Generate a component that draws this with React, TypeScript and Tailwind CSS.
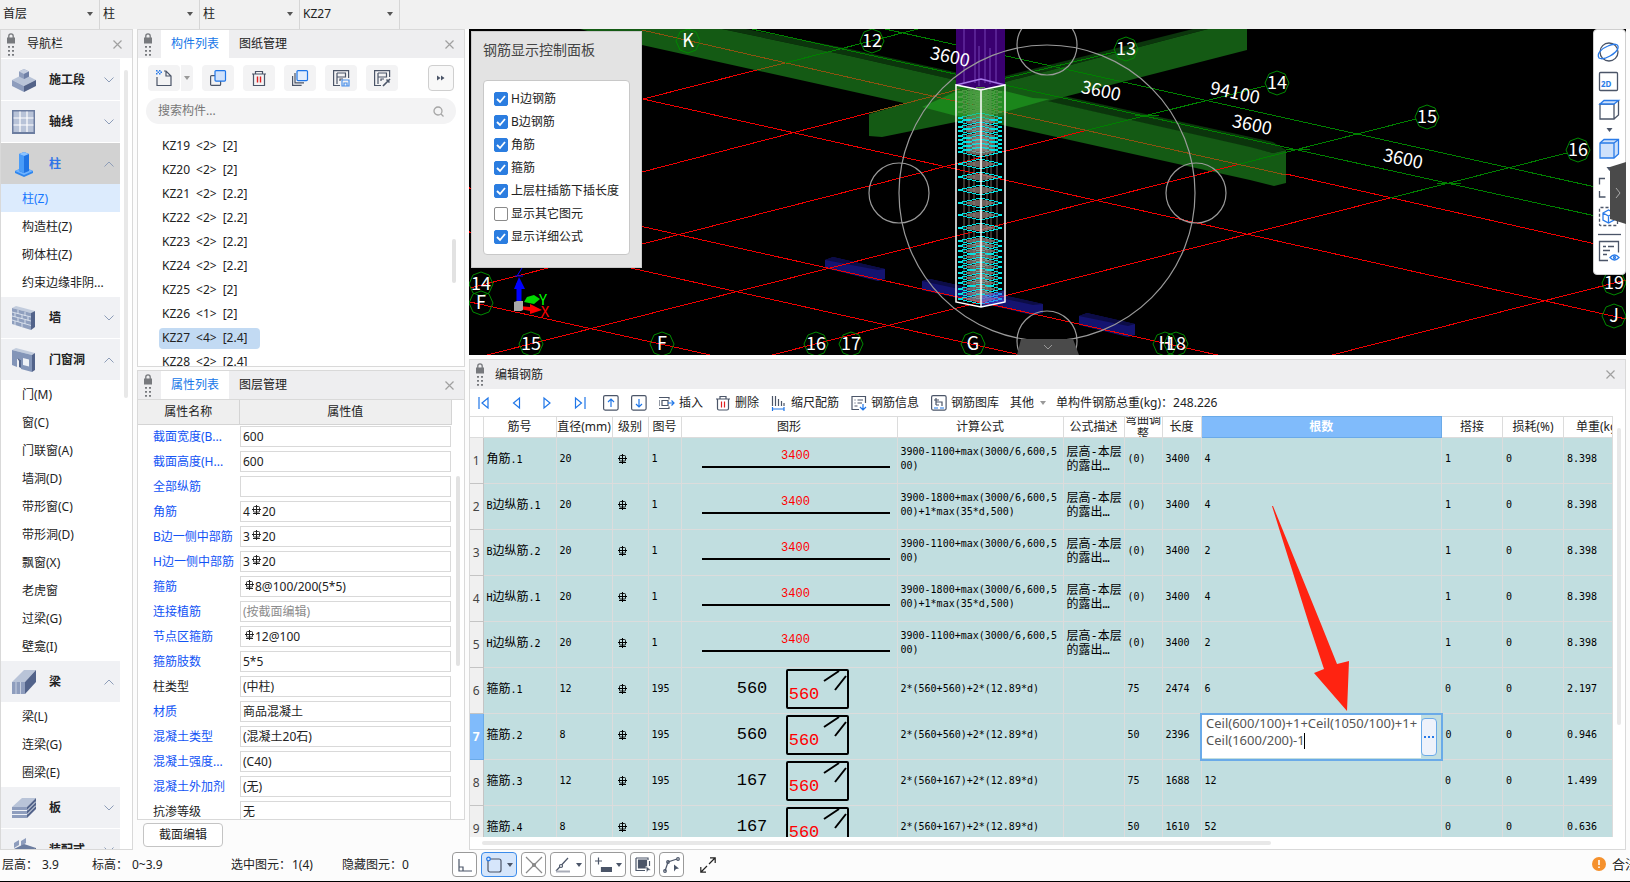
import React from 'react';

const FONT = 'font-["Noto_Sans","Noto_Sans_CJK_SC",sans-serif]';
const MONO = 'font-["DejaVu_Sans_Mono","Noto_Sans_CJK_SC",monospace]';

const selectors = ['首层', '柱', '柱', 'KZ27'];

const navGroups = [
  { name: '施工段', icon: 'stage', open: false, items: [] },
  { name: '轴线', icon: 'grid', open: false, items: [] },
  { name: '柱', icon: 'column', open: true, active: true, items: ['柱(Z)', '构造柱(Z)', '砌体柱(Z)', '约束边缘非阴...'] },
  { name: '墙', icon: 'wall', open: false, items: [] },
  {
    name: '门窗洞',
    icon: 'door',
    open: true,
    items: ['门(M)', '窗(C)', '门联窗(A)', '墙洞(D)', '带形窗(C)', '带形洞(D)', '飘窗(X)', '老虎窗', '过梁(G)', '壁龛(I)'],
  },
  { name: '梁', icon: 'beam', open: true, items: ['梁(L)', '连梁(G)', '圈梁(E)'] },
  { name: '板', icon: 'slab', open: false, items: [] },
  { name: '装配式', icon: 'prefab', open: false, items: [] },
];

const components = [
  'KZ19 <2> [2]',
  'KZ20 <2> [2]',
  'KZ21 <2> [2.2]',
  'KZ22 <2> [2.2]',
  'KZ23 <2> [2.2]',
  'KZ24 <2> [2.2]',
  'KZ25 <2> [2]',
  'KZ26 <1> [2]',
  'KZ27 <4> [2.4]',
  'KZ28 <2> [2.4]',
];

// bar: the steel grade mark stands between prefix and value
const properties = [
  { name: '截面宽度(B...', value: '600', blue: true },
  { name: '截面高度(H...', value: '600', blue: true },
  { name: '全部纵筋', value: '', blue: true },
  { name: '角筋', prefix: '4', bar: true, value: '20', blue: true },
  { name: 'B边一侧中部筋', prefix: '3', bar: true, value: '20', blue: true },
  { name: 'H边一侧中部筋', prefix: '3', bar: true, value: '20', blue: true },
  { name: '箍筋', bar: true, value: '8@100/200(5*5)', blue: true },
  { name: '连接植筋', value: '(按截面编辑)', blue: true, muted: true },
  { name: '节点区箍筋', bar: true, value: '12@100', blue: true },
  { name: '箍筋肢数', value: '5*5', blue: true },
  { name: '柱类型', value: '(中柱)', blue: false },
  { name: '材质', value: '商品混凝土', blue: true },
  { name: '混凝土类型', value: '(混凝土20石)', blue: true },
  { name: '混凝土强度...', value: '(C40)', blue: true },
  { name: '混凝土外加剂', value: '(无)', blue: true },
  { name: '抗渗等级', value: '无', blue: false },
];

const displayOptions = [
  { label: 'H边钢筋', checked: true },
  { label: 'B边钢筋', checked: true },
  { label: '角筋', checked: true },
  { label: '箍筋', checked: true },
  { label: '上层柱插筋下插长度', checked: true },
  { label: '显示其它图元', checked: false },
  { label: '显示详细公式', checked: true },
];

const SHORT = ['3900-1100+max(3000/6,600,5', '00)'];
const LONG = ['3900-1800+max(3000/6,600,5', '00)+1*max(35*d,500)'];

const rebarRows = [
  { pre: '', cjk: '角筋', post: '.1', dia: '20', fig: '1', formula: SHORT, desc: true, bend: '(0)', len: '3400', count: '4', lap: '1', weight: '8.398' },
  { pre: 'B', cjk: '边纵筋', post: '.1', dia: '20', fig: '1', formula: LONG, desc: true, bend: '(0)', len: '3400', count: '4', lap: '1', weight: '8.398' },
  { pre: 'B', cjk: '边纵筋', post: '.2', dia: '20', fig: '1', formula: SHORT, desc: true, bend: '(0)', len: '3400', count: '2', lap: '1', weight: '8.398' },
  { pre: 'H', cjk: '边纵筋', post: '.1', dia: '20', fig: '1', formula: LONG, desc: true, bend: '(0)', len: '3400', count: '4', lap: '1', weight: '8.398' },
  { pre: 'H', cjk: '边纵筋', post: '.2', dia: '20', fig: '1', formula: SHORT, desc: true, bend: '(0)', len: '3400', count: '2', lap: '1', weight: '8.398' },
  { pre: '', cjk: '箍筋', post: '.1', dia: '12', fig: '195', side: '560', formula: ['2*(560+560)+2*(12.89*d)'], bend: '75', len: '2474', count: '6', lap: '0', weight: '2.197' },
  { pre: '', cjk: '箍筋', post: '.2', dia: '8', fig: '195', side: '560', formula: ['2*(560+560)+2*(12.89*d)'], bend: '50', len: '2396', count: '', editing: true, lap: '0', weight: '0.946' },
  { pre: '', cjk: '箍筋', post: '.3', dia: '12', fig: '195', side: '167', formula: ['2*(560+167)+2*(12.89*d)'], bend: '75', len: '1688', count: '12', lap: '0', weight: '1.499' },
  { pre: '', cjk: '箍筋', post: '.4', dia: '8', fig: '195', side: '167', formula: ['2*(560+167)+2*(12.89*d)'], bend: '50', len: '1610', count: '52', lap: '0', weight: '0.636' },
];

const RebarMark = ({ className = '' }: { className?: string }) => (
  <svg className={`inline-block shrink-0 ${className}`} width="9" height="10" viewBox="0 0 9 10" fill="none" stroke="currentColor">
    <path d="M4.500 0v10M0 4.500h9M1 8.500h7" />
    <path d="M2.500 1.500h4q1 0 1 1v4q0 .5-.5.5h-5q-.5 0-.5-.5v-4q0-1 1-1z" strokeWidth=".9" />
  </svg>
);

const Caret = ({ className = 'text-[#555]' }: { className?: string }) => (
  <svg className={`shrink-0 ${className}`} width="6" height="4" viewBox="0 0 6 4" fill="currentColor">
    <path d="M0 0h6L3 4z" />
  </svg>
);

const Chevron = ({ open }: { open: boolean }) => (
  <svg className="mr-1.5 ml-auto text-[#8d9db8]" width="10" height="6" viewBox="0 0 10 6" fill="none" stroke="currentColor">
    <path d={open ? 'M.5 5.500L5 1l4.500 4.500' : 'M.5 .5L5 5l4.500-4.500'} />
  </svg>
);

const CloseButton = () => (
  <button aria-label="关闭" className="mr-2.5 ml-auto text-[#a0a0a0]">
    <svg width="9" height="9" viewBox="0 0 9 9" stroke="currentColor" strokeWidth="1.2">
      <path d="M.5 .5l8 8M8.500 .5l-8 8" />
    </svg>
  </button>
);

const Grip = () => (
  <svg className="shrink-0 text-[#77797d]" width="8" height="23" viewBox="0 0 8 23" fill="currentColor">
    <path d="M0 4.500h8v6H0z" />
    <path d="M1.800 5V3a2.200 2.200 0 0 1 4.400 0v2" fill="none" stroke="currentColor" strokeWidth="1.300" />
    <path d="M1 13h2v1.800H1zM5 13h2v1.800H5zM1 17h2v1.800H1zM5 17h2v1.800H5zM1 21h2v1.800H1zM5 21h2v1.800H5z" />
  </svg>
);

const NavIcon = ({ name }: { name: string }) => (
  <svg width="26" height="26" viewBox="0 0 26 26" className="shrink-0">
    {name === 'stage' && (
      <>
        <path d="M1 13l12-6 12 6-12 6z" fill="#b9c4d8" />
        <path d="M1 13l12 6v6L1 19z" fill="#8e9dbd" />
        <path d="M25 13l-12 6v6l12-6z" fill="#536388" />
        <path d="M8 4.500L13 2l5 2.500v5L13 12l-5-2.500z" fill="#8e9dbd" />
        <path d="M8 4.500L13 2l5 2.500L13 7z" fill="#c6cfe0" />
        <path d="M13 7l5-2.500v5L13 12z" fill="#6f80a6" />
      </>
    )}
    {name === 'grid' && (
      <>
        <path d="M1 1h23v24H1z" fill="#6c7da0" />
        <path d="M2.500 2.500h20v20.500h-20z" fill="#b8c3d8" />
        <path d="M9 2.500v20.500M16 2.500v20.500M2.500 9h20M2.500 16h20" stroke="#fff" strokeWidth="1.200" />
      </>
    )}
    {name === 'column' && (
      <>
        <path d="M4 20l9-4 9 4v2l-9 4-9-4z" fill="#2f86ee" />
        <path d="M4 20l9-4 9 4-9 4z" fill="#70b3ff" />
        <path d="M8 3l5-2 5 2v17l-5 2-5-2z" fill="#2074e4" />
        <path d="M8 3l5 2v17l-5-2z" fill="#4a9cf8" />
        <path d="M8 3l5-2 5 2-5 2z" fill="#8cc4ff" />
      </>
    )}
    {name === 'wall' && (
      <>
        <path d="M1 3l4-2 19 5-4 2z" fill="#c2ccdd" />
        <path d="M20 8l4-2v16l-4 3z" fill="#52638a" />
        <path d="M1 3l19 5v17L1 19z" fill="#8f9fbe" />
        <path d="M1 7l19 5M1 11l19 5M1 15l19 5.500M7 5v4M14 7v4M4 8v4M11 10v4M17 11.500v4M7 13v4M14 15v4M4 16v4M11 18v4" stroke="#dfe5ef" strokeWidth=".9" />
      </>
    )}
    {name === 'door' && (
      <>
        <path d="M1 3l4-2 19 5-3 2z" fill="#c2ccdd" />
        <path d="M21 8l3-2v17l-3 2z" fill="#52638a" />
        <path d="M1 3l20 5v17l-11-3v-9l-4-1.500V20l-5-2z" fill="#8395b8" />
        <path d="M12 11l6 1.500v7L12 18z" fill="#eef1f6" />
        <path d="M6 11l4 2v8l-2-1v-6z" fill="#52638a" />
      </>
    )}
    {name === 'beam' && (
      <>
        <path d="M1 13L13 1h12L14 13z" fill="#b9c4d8" />
        <path d="M14 13L25 1v12L14 25z" fill="#52638a" />
        <path d="M1 13h13v12H1z" fill="#8e9dbd" />
        <path d="M5 13v12M9.500 13v12" stroke="#c6cfe0" />
      </>
    )}
    {name === 'slab' && (
      <>
        <path d="M1 12L11 3h14L16 12z" fill="#b9c4d8" />
        <path d="M16 12l9-9v11l-9 9z" fill="#52638a" />
        <path d="M1 12h15v11H1z" fill="#8e9dbd" />
        <path d="M1 15.500h15l9-9M1 19.500h15l9-9" stroke="#eef1f6" fill="none" />
      </>
    )}
    {name === 'prefab' && (
      <>
        <path d="M3 6l5-3v5l-5 3zM10 4l5-3v5l-5 3z" fill="#8e9dbd" />
        <path d="M3 12l10-5 12 4-10 5z" fill="#6c7da0" />
        <path d="M3 12l12 4v10L3 22z" fill="#8e9dbd" />
        <path d="M25 11l-10 5v10l10-4z" fill="#3f5074" />
      </>
    )}
  </svg>
);

const NavPanel = () => (
  <nav className="flex w-[133px] shrink-0 flex-col overflow-hidden border border-[#d9d9d9] bg-white">
    <div className="flex h-7 shrink-0 items-center bg-[#eeeef0] pl-1.5">
      <Grip />
      <span className="ml-3">导航栏</span>
      <CloseButton />
    </div>
    <div className="flex min-h-0 flex-1">
      <div className="min-w-0 flex-1 overflow-hidden">
        {navGroups.map((group) => (
          <div key={group.name}>
            <button
              className={`mt-px flex h-[41px] w-full items-center pl-2.5 text-left ${
                group.active ? 'bg-[#d2d2d2] text-[#2f75e8]' : 'bg-[#f0f1f4]'
              }`}
            >
              <NavIcon name={group.icon} />
              <span className="ml-3 font-bold">{group.name}</span>
              <Chevron open={group.open} />
            </button>
            {group.items.map((item) => (
              <button
                key={item}
                className={`block h-7 w-full pt-0.5 pl-[21px] text-left whitespace-nowrap ${item === '柱(Z)' ? 'bg-[#dcebfd] text-[#1677ff]' : ''}`}
              >
                {item}
              </button>
            ))}
          </div>
        ))}
      </div>
      <div className="w-3 shrink-0 pt-3 pl-1">
        <div className="h-[328px] w-1 rounded-full bg-[#e8e8e8]" />
      </div>
    </div>
  </nav>
);

const PanelTabs = ({ tabs }: { tabs: string[] }) => (
  <div className="flex h-7 shrink-0 items-center bg-[#eeeef0] pl-1.5">
    <Grip />
    <div role="tablist" className="ml-[9px] flex h-full">
      <button role="tab" aria-selected="true" className="w-[68px] bg-white text-[#1677e8]">
        {tabs[0]}
      </button>
      <button role="tab" aria-selected="false" className="w-[68px]">
        {tabs[1]}
      </button>
    </div>
    <CloseButton />
  </div>
);

const ToolButton = ({ label, children }: { label: string; children: React.ReactNode }) => (
  <button aria-label={label} className="flex h-[26px] w-8 items-center justify-center rounded bg-[#f3f3f4]">
    <svg width="18" height="18" viewBox="0 0 18 18" fill="none" stroke="#4b5568" strokeWidth="1.2">
      {children}
    </svg>
  </button>
);

const ComponentPanel = () => (
  <section className="flex h-[338px] shrink-0 flex-col overflow-hidden border border-[#d9d9d9] bg-white">
    <PanelTabs tabs={['构件列表', '图纸管理']} />
    <div className="mt-[7px] flex px-2.5">
      <div className="flex gap-px">
        <ToolButton label="新建">
          <path d="M2 8v8.500h14V7l-5-5H9M11 2v5h5" />
          <path d="M1 1h1.500v1.500H1zM4 1h1.500v1.500H4zM2.500 2.500H4V4H2.500zM5.500 2.500H7V4H5.500zM1 4h1.500v1.500H1zM4 4h1.500v1.500H4z" fill="#2a7be8" stroke="none" />
        </ToolButton>
        <button aria-label="更多新建" className="flex w-3 items-center justify-center rounded-r bg-[#f3f3f4]">
          <Caret className="text-[#999]" />
        </button>
      </div>
      <div className="ml-[9px] flex gap-[9px]">
        <ToolButton label="复制">
          <rect x="1.600" y="6.600" width="10" height="9.800" rx="1" />
          <rect x="6" y="1.600" width="10.500" height="10.500" rx="1" fill="#cfe1fb" stroke="#1f76e8" />
        </ToolButton>
        <ToolButton label="删除">
          <path d="M2 5h14M5.500 5V2.500h7V5M3.500 5v11.500h11V5" />
          <path d="M7.500 7.500v6M10.500 7.500v6" stroke="#e02020" strokeWidth="1.400" />
        </ToolButton>
        <ToolButton label="层间复制">
          <rect x="6" y="1.600" width="10.500" height="10" rx="1" fill="#e3eefc" stroke="#1f76e8" />
          <path d="M4 4v9.800h9M1.600 7v9.400h9" />
        </ToolButton>
        <ToolButton label="存档">
          <path d="M8 16.500H1.600V1.600h15V9M5 4v11M5 4h9M5 8h8.500V4.500M8 12v-2h3" />
          <path d="M10 11h7v6h-7zM12 17v-3h3v3" stroke="#4a90ea" />
        </ToolButton>
        <ToolButton label="提取">
          <path d="M8 16.500H1.600V1.600h15V8M5 4v11M5 4h9M5 8h8.500V4.500M8 12v-2h3" />
          <path d="M10 17l5-5M13.500 10.500l3 3M15 12l2-2" strokeWidth="1.600" />
        </ToolButton>
      </div>
      <button aria-label="更多" className="ml-auto flex h-[26px] w-[26px] items-center justify-center rounded border border-[#cfcfcf] bg-[#f8f8f8]">
        <svg width="8" height="6" viewBox="0 0 8 6" fill="#4b5568">
          <path d="M0 .5v5L3.500 3zM4 .5v5L7.500 3z" />
        </svg>
      </button>
    </div>
    <label className="mx-2 mt-[7px] flex h-[26px] shrink-0 items-center rounded-full bg-[#f3f3f4] pr-3 pl-3">
      <input aria-label="搜索构件" placeholder="搜索构件..." className="min-w-0 flex-1 bg-transparent outline-none placeholder:text-[#777]" />
      <svg width="11" height="11" viewBox="0 0 11 11" fill="none" stroke="#a5a5a5" strokeWidth="1.300">
        <circle cx="5" cy="5" r="4" />
        <path d="M8 8l2.500 2.500" />
      </svg>
    </label>
    <div className="flex min-h-0 flex-1 pt-2.5 pl-[21px]">
      <ul className="min-w-0 flex-1 overflow-hidden">
        {components.map((name) => (
          <li key={name} className="flex h-6 items-center">
            <button
              className={`flex h-[21px] w-[101px] items-center gap-1.5 rounded-sm pl-[3px] text-left whitespace-nowrap ${
                name.startsWith('KZ27') ? 'bg-[#c2daf3]' : ''
              }`}
            >
              {name.split(' ').map((part) => (
                <span key={part}>{part}</span>
              ))}
            </button>
          </li>
        ))}
      </ul>
      <div className="mt-[105px] mr-2 h-11 w-1 rounded-full bg-[#e2e2e2]" />
    </div>
  </section>
);

const PropertyPanel = () => (
  <section className="flex min-h-0 flex-1 flex-col">
    <div className="flex min-h-0 flex-1 flex-col overflow-hidden border border-[#d9d9d9] bg-white">
      <PanelTabs tabs={['属性列表', '图层管理']} />
      <div className="flex min-h-0 flex-1 overflow-hidden border-t border-[#d9d9d9]">
        <div className="min-w-0 flex-1">
          <table className="w-full table-fixed border-collapse">
            <thead>
              <tr className="h-6 bg-[#efefef]">
                <th className="w-[101px] border-r border-b border-[#d4d4d4] font-normal">属性名称</th>
                <th className="border-r border-b border-[#d4d4d4] font-normal">属性值</th>
              </tr>
            </thead>
            <tbody>
              {properties.map((prop, i) => (
                <tr key={prop.name} className="h-[25px]">
                  <td className={`overflow-hidden pl-[15px] whitespace-nowrap ${prop.blue ? 'text-[#1253f5]' : ''}`}>
                    <label htmlFor={`prop-${i}`}>{prop.name}</label>
                  </td>
                  <td className="px-px py-0">
                    <div className="flex h-[21px] items-center border border-[#d9d9d9] px-0.5">
                      {prop.prefix}
                      {prop.bar && <RebarMark className="mr-px mb-1 ml-0.5" />}
                      <input
                        id={`prop-${i}`}
                        defaultValue={prop.value}
                        className={`min-w-0 flex-1 bg-transparent outline-none ${prop.muted ? 'text-[#8c8c8c]' : ''}`}
                      />
                    </div>
                  </td>
                </tr>
              ))}
            </tbody>
          </table>
        </div>
        <div className="w-3 shrink-0 pt-[76px] pl-1">
          <div className="h-[190px] w-1 rounded-full bg-[#e2e2e2]" />
        </div>
      </div>
    </div>
    <div className="flex h-[30px] shrink-0 items-center px-1.5">
      <button className="h-6 w-20 rounded border border-[#c4c4c4] bg-white">截面编辑</button>
    </div>
  </section>
);

const redLines = [
  [643, 99, 1626, 319],
  [1286, 174, 1600, 245],
  [465, 187, 1222, 356],
  [465, 231, 1025, 356],
  [470, 302, 715, 356],
  [483, 356, 1240, 164],
  [470, 288, 1088, 130],
  [642, 172, 869, 113],
  [643, 99, 757, 70],
  [768, 356, 1390, 198],
  [1328, 356, 1626, 280],
];

const greenLines = [
  [885, 29, 1600, 188],
  [752, 29, 1600, 217],
  [785, 63, 918, 29],
  [960, 89, 1115, 52],
  [1088, 130, 1265, 86],
  [1240, 164, 1416, 119],
  [1390, 198, 1567, 153],
];

const axisMarks: [string, number, number][] = [
  ['K', 688, 41],
  ['12', 872, 41],
  ['13', 1126, 49],
  ['14', 1277, 83],
  ['15', 1427, 117],
  ['16', 1578, 150],
  ['19', 1614, 283],
  ['J', 1614, 316],
  ['14', 481, 284],
  ['F', 481, 303],
  ['15', 531, 344],
  ['F', 662, 344],
  ['16', 816, 344],
  ['17', 851, 344],
  ['G', 973, 344],
  ['H', 1165, 344],
  ['18', 1176, 344],
];

const dimensions: [string, number, number][] = [
  ['3600', 950, 57],
  ['3600', 1101, 91],
  ['94100', 1235, 93],
  ['3600', 1252, 125],
  ['3600', 1403, 159],
];

// heights of the stirrups along the column
const stirrups = [
  92, 97, 102, 107, 112, 118, 122, 127, 131, 136, 140, 144, 148, 152, 164, 177, 190, 203, 215, 228, 241, 246, 251, 257, 262, 267, 273, 278, 283, 289, 294, 299,
];

const Scene = () => (
  <svg
    className='block h-full w-full font-["Noto_Sans_CJK_SC",sans-serif]'
    viewBox="469 29 1157 327"
    preserveAspectRatio="xMinYMin slice"
    fill="none"
  >
    <rect x="469" y="29" width="2000" height="1000" fill="#000" />
    <path d="M722 29h24l104 20 423 93 13 8-13 3-423-97z" fill="#0b350c" />
    <path d="M580 29h142l128 27 400 91 23 6 13-3v33l-12 3-24-6-400-89-208-46z" fill="#145a14" />
    <path d="M1193 29h15L1005 82v-6z" fill="#0b350c" />
    <path d="M869 114l88-25 48-7 203-53h39v21l-242 62-123 25-13-1z" fill="#145a14" />
    <path d="M922 107l35-16h48l28 7 17 1-45 13-45 5z" fill="#1b861b" />
    <path d="M825 260l8-3 52 12v10l-7 2-53-13zM922 281l8-2 113 25v9l-10 2-111-25zM1079 316l8-3 48 11v11l-7 2-49-12z" fill="#141470" />
    <path d="M825 260l8-3 52 12-7 1zM922 281l8-2 113 25-10 1zM1079 316l8-3 48 11-7 2z" fill="#0c0c46" />
    <g stroke="#f00000" shapeRendering="crispEdges">
      {redLines.map(([x1, y1, x2, y2], i) => (
        <line key={i} x1={x1} y1={y1} x2={x2} y2={y2} />
      ))}
    </g>
    <g stroke="#8a5210" shapeRendering="crispEdges">
      <path d="M642 30l223 51 421 94M869 113l91-24M757 70l28-7" />
    </g>
    <g stroke="#008000" shapeRendering="crispEdges">
      {greenLines.map(([x1, y1, x2, y2], i) => (
        <line key={i} x1={x1} y1={y1} x2={x2} y2={y2} />
      ))}
      <path d="M1135 115h24M1286 149h24M1437 183h24" />
    </g>

    {/* upper storey column */}
    <path d="M956 29h49v56l-24 5-25-5z" fill="#3a0070" />
    <path d="M964 29v54M975 29v54M985 29v54M996 29v54M979 46v40M990 48v36" stroke="#7440b4" />

    {/* rebar cage */}
    <path d="M964 90v212M969 90v212M974 90v212M987 90v212M991 90v212M997 90v212" stroke="#75675f" />
    {stirrups.map((y) => (
      <g key={y} shapeRendering="crispEdges">
        <path d={`M964 ${y}l17-4 16 4-16 4z`} fill={y < 116 ? '#67a357' : '#9a8880'} fillOpacity=".7" />
        <path d={`M958 ${y}l23-5 21 5-21 5z`} stroke={y < 116 ? '#5f9a50' : '#00e5e5'} />
      </g>
    ))}
    <path d="M956 85l25 5v31l-25-6zM981 90l24-5v30l-24 6z" fill="#2f9a2f" fillOpacity=".4" />
    <path d="M981 296l24-6v13l-24 4z" fill="#5050ff" fillOpacity=".45" />
    <path d="M956 85l25-6 24 6" stroke="#a878e8" strokeWidth="1.500" />
    <path d="M956 85v217l25 5 24-5V85l-24 5zM981 90v217" stroke="#fff" strokeWidth="1.500" />

    {/* orbit rings */}
    <g stroke="#9a9a9a" strokeWidth="1.200">
      <circle cx="1047" cy="193" r="148" />
      <circle cx="899" cy="193" r="30" />
      <circle cx="1196" cy="193" r="30" />
      <circle cx="1047" cy="45" r="30" />
      <circle cx="1047" cy="341" r="30" />
    </g>

    {axisMarks.map(([label, x, y], i) => (
      <g key={i}>
        <path d={`M${x} ${y - 12}l8 3 4 9-4 9-8 3-8-3-4-9 4-9z`} stroke="#008a00" />
        <text x={x} y={y + 6} textAnchor="middle" fontSize="18" fill="#fff">
          {label}
        </text>
      </g>
    ))}
    {dimensions.map(([label, x, y], i) => (
      <text key={i} x={x} y={y + 6} textAnchor="middle" fontSize="18" fill="#fff" transform={`rotate(12 ${x} ${y})`}>
        {label}
      </text>
    ))}

    {/* axis gizmo */}
    <path d="M519 303v-20" stroke="#0000ff" strokeWidth="5" />
    <path d="M514 289l5-12 6 12z" fill="#0000ff" />
    <path d="M515 276h8M517 276l5-8" stroke="#0000ff" />
    <path d="M524 302l3-5 7-2 6 4-6 5z" fill="#00d800" />
    <path d="M519 306l11 1v-3l12 6-12 4v-3l-10-2z" fill="#ff0000" />
    <path d="M514 302l3-1h6v9l-2 1h-7z" fill="#a8a8a8" />
    <text x="543" y="305" textAnchor="middle" fontSize="15" fill="#00ff00">Y</text>
    <text x="545" y="317" textAnchor="middle" fontSize="15" fill="#ff0000">X</text>
  </svg>
);

const DisplayControl = () => (
  <div className="absolute top-0.5 left-0.5 border border-[#c9c9c9] bg-[#e3e3e3] px-[11px] pt-1.5 pb-3">
    <h2 className="mb-[18px] h-6 text-sm leading-6 text-[#444]">钢筋显示控制面板</h2>
    <div className="w-[147px] rounded border border-[#c8c8c8] bg-white px-2.5 py-1.5">
      {displayOptions.map((option) => (
        <label key={option.label} className="flex h-[23px] items-center gap-[3px] whitespace-nowrap">
          <span className="relative flex h-3.5 w-3.5 shrink-0">
            <input
              type="checkbox"
              defaultChecked={option.checked}
              className="peer h-3.5 w-3.5 appearance-none rounded-[2px] border border-[#8a8a8a] bg-white checked:border-[#2b7de0] checked:bg-[#2b7de0]"
            />
            <svg className="pointer-events-none absolute inset-0 hidden peer-checked:block" width="14" height="14" viewBox="0 0 14 14" fill="none" stroke="#fff" strokeWidth="1.800">
              <path d="M3 7l3 3 5-6" />
            </svg>
          </span>
          {option.label}
        </label>
      ))}
    </div>
  </div>
);

const ViewToolbar = () => (
  <div className="absolute top-0 right-0 flex w-[33px] flex-col items-center rounded-sm border border-[#cfcfcf] bg-white">
    <svg width="31" height="244" viewBox="1594 30 31 244" fill="none" stroke="#4b5568" strokeWidth="1.300">
      <circle cx="1609" cy="52" r="9" />
      <path d="M1599 58c-3-5 4-10 9-12 6-3 11-2 10 2-1 5-14 13-19 10z" stroke="#2a7be8" />
      <rect x="1599.500" y="72.500" width="18" height="18" rx="1" />
      <text x="1601" y="87" fontSize="8" fontWeight="700" fill="#2a7be8" stroke="none">2D</text>
      <path d="M1600 104h14v15h-14zM1614 119l4.500-4v-14.500" />
      <path d="M1600 104l4-3.500h14.500l-4.500 3.500z" fill="#cfe1fb" stroke="#2a7be8" />
      <path d="M1606.500 128h6l-3 4zM1606.500 167h6l-3 4z" fill="#4b5568" stroke="none" />
      <path d="M1600 143l4-3.500h14.500v14.500l-4.500 4h-14z" fill="#cfe1fb" stroke="#2a7be8" />
      <path d="M1600 143h14v15M1614 143l4.500-3.500" stroke="#2a7be8" />
      <path d="M1605 178.500h-5.500v6M1599.500 191v6h6" />
      <rect x="1599.500" y="207.500" width="18" height="18" rx="1" strokeDasharray="3 2" />
      <path d="M1603 213l5.500-3 5.500 3v7l-5.500 3-5.500-3zM1603 213l5.500 3 5.500-3M1608.500 216v7" stroke="#2a7be8" />
      <path d="M1598 234.500h23" />
      <path d="M1608 260.500h-8.500v-19h19v11M1603 246.500h3M1608 246.500h6M1603 250.500h7M1603 254.500h4" />
      <path d="M1610 257.500q4.500-5 9 0-4.500 5-9 0z" stroke="#2a7be8" />
      <circle cx="1614.500" cy="257.500" r="1" stroke="#2a7be8" />
    </svg>
  </div>
);

const Viewport = () => (
  <section className="relative min-h-0 flex-2 overflow-hidden bg-black">
    <Scene />
    <button aria-label="收起下方面板" className="absolute bottom-0 left-1/2 -translate-x-1/2">
      <svg width="62" height="16" viewBox="0 0 62 16">
        <path d="M4 0h52l6 16H0z" fill="#4a4a4a" />
        <path d="M27 6l4 4 4-4" fill="none" stroke="#999" />
      </svg>
    </button>
    <DisplayControl />
    <ViewToolbar />
    <button aria-label="收起右侧面板" className="absolute top-[133px] right-0">
      <svg width="16" height="62" viewBox="0 0 16 62">
        <path d="M16 0v62L0 57V5z" fill="#4a4a4a" />
        <path d="M6 26l4 5-4 5" fill="none" stroke="#aaa" />
      </svg>
    </button>
  </section>
);

const BarIcon = ({ width = 16, children }: { width?: number; children: React.ReactNode }) => (
  <svg className="shrink-0" width={width} height="16" viewBox={`0 0 ${width} 16`} fill="none" stroke="#4b5568" strokeWidth="1.200">
    {children}
  </svg>
);

const EditToolbar = () => (
  <div className="flex h-[27px] shrink-0 items-center overflow-hidden pl-2 whitespace-nowrap">
    <button aria-label="首行" className="w-[34px]">
      <BarIcon width={12}>
        <path d="M1 2v12M10 3v10L4 8z" stroke="#1f76e8" />
      </BarIcon>
    </button>
    <button aria-label="上一行" className="w-[31px]">
      <BarIcon width={9}>
        <path d="M7.500 3v10L1.500 8z" stroke="#1f76e8" />
      </BarIcon>
    </button>
    <button aria-label="下一行" className="w-[31px]">
      <BarIcon width={9}>
        <path d="M1 3v10l6-5z" stroke="#1f76e8" />
      </BarIcon>
    </button>
    <button aria-label="末行" className="w-[29px]">
      <BarIcon width={12}>
        <path d="M11 2v12M1.500 3v10l6-5z" stroke="#1f76e8" />
      </BarIcon>
    </button>
    <button aria-label="上移" className="w-7">
      <BarIcon>
        <rect x=".6" y=".6" width="14.500" height="14.500" rx="1.500" />
        <path d="M8 12V4M5 7l3-3 3 3" stroke="#1f76e8" />
      </BarIcon>
    </button>
    <button aria-label="下移" className="w-7">
      <BarIcon>
        <rect x=".6" y=".6" width="14.500" height="14.500" rx="1.500" />
        <path d="M8 4v8M5 9l3 3 3-3" stroke="#1f76e8" />
      </BarIcon>
    </button>
    <button className="mr-3 flex items-center gap-1">
      <BarIcon>
        <path d="M0 2.500h10v2M0 13.500h10v-2M3 5.500h6v5H3zM0 5v6" />
        <path d="M9 8h6M12.500 5.500L15 8l-2.500 2.500" stroke="#1f76e8" />
      </BarIcon>
      插入
    </button>
    <button className="mr-3 flex items-center gap-1">
      <BarIcon>
        <path d="M1 4h14M5 4V1.500h6V4M2.500 4v9.500q0 1.500 1.500 1.500h8q1.500 0 1.500-1.500V4" />
        <path d="M6.500 6.500v6M9.500 6.500v6" stroke="#e02020" />
      </BarIcon>
      删除
    </button>
    <button className="mr-3 flex items-center gap-1">
      <BarIcon>
        <path d="M1.500 1v10M4.500 1v10M7.500 4v7M10.500 6v5M13 8v3" />
        <path d="M1 14h12M1.500 12v4M13 12v4" stroke="#1f76e8" />
      </BarIcon>
      缩尺配筋
    </button>
    <button className="mr-3 flex items-center gap-1">
      <BarIcon>
        <path d="M8 14.500H1V1.500h13.500V8M3.500 5h1M6.500 5H12M3.500 8h1M6.500 8H11M3.500 11h3" />
        <path d="M12 9v5M9 12l3 3 3-3M12 15v-3" stroke="#1f76e8" />
      </BarIcon>
      钢筋信息
    </button>
    <button className="mr-[11px] flex items-center gap-1">
      <BarIcon>
        <rect x=".6" y=".6" width="14.500" height="14.500" rx="1.500" />
        <path d="M3 5h5M5 3v7M5 7h6v4M5 10h3" />
        <path d="M3 13h4M9 13h4" stroke="#1f76e8" />
      </BarIcon>
      钢筋图库
    </button>
    <button className="flex items-center gap-1.5">
      其他
      <Caret className="text-[#999]" />
    </button>
    <span className="ml-2.5">单构件钢筋总重(kg)：248.226</span>
  </div>
);

const Shape = ({ side }: { side?: string }) =>
  side ? (
    <svg
      className='mx-auto block font-["Liberation_Mono",monospace]'
      width="194"
      height="42"
      viewBox="0 0 194 42"
      fill="none"
      stroke="#000"
      strokeWidth="2"
    >
      <text x="60" y="25" textAnchor="middle" fontSize="17" fill="#000" stroke="none">
        {side}
      </text>
      <rect x="95" y="2" width="61" height="38" rx="1" />
      <path d="M132 13l15-10M143 22l11-14" />
      <text x="112" y="31" textAnchor="middle" fontSize="17" fill="#f00" stroke="none">
        560
      </text>
    </svg>
  ) : (
    <div className='mr-1 mb-1 ml-[17px] border-b-2 border-black text-center font-["Liberation_Mono",monospace] text-xs leading-[20px] text-[#f00]'>3400</div>
  );

const columns = ['筋号', '直径(mm)', '级别', '图号', '图形', '计算公式', '公式描述', '弯曲调整', '长度', '根数', '搭接', '损耗(%)', '单重(kg)'];

const RebarTable = () => (
  <table className="w-full table-fixed border-collapse">
    <colgroup>
      <col className="w-[13px]" />
      <col className="w-[73px]" />
      <col className="w-14" />
      <col className="w-9" />
      <col className="w-[33px]" />
      <col className="w-[216px]" />
      <col className="w-[166px]" />
      <col className="w-[61px]" />
      <col className="w-[38px]" />
      <col className="w-[39px]" />
      <col />
      <col className="w-[61px]" />
      <col className="w-[61px]" />
      <col className="w-[49px]" />
    </colgroup>
    <thead>
      <tr className="bg-white">
        <th className="border border-l-0 border-[#dcdcdc]" />
        {columns.map((name) => (
          <th
            key={name}
            className={`border p-0 ${name === '根数' ? 'border-[#6aaae8] bg-[#80bbfb] font-bold text-white' : 'border-[#dcdcdc] font-normal'}`}
          >
            <div
              className={`flex h-5 items-center overflow-hidden leading-[14px] ${
                name === '弯曲调整' ? 'justify-center' : name === '单重(kg)' ? 'pl-3 whitespace-nowrap' : 'justify-center whitespace-nowrap'
              }`}
            >
              {name}
            </div>
          </th>
        ))}
      </tr>
    </thead>
    <tbody className={`bg-[#c1dee0] text-[10px] leading-[14px] text-black ${MONO}`}>
      {rebarRows.map((row, i) => (
        <tr key={i} className="h-[46px] [&>td]:border [&>td]:border-[#dcdcdc] [&>td]:px-[3px] [&>td]:pt-0 [&>td]:pb-[3px] [&>td]:whitespace-nowrap">
          <th
            scope="row"
            className={`border border-l-0 p-0 text-xs ${FONT} ${
              row.editing ? 'border-[#6aaae8] bg-[#80bbfb] font-bold text-white' : 'border-[#c4c4c4] bg-[#f0f0f0] font-normal text-[#444]'
            }`}
          >
            {i + 1}
          </th>
          <td>
            {row.pre}
            <span className="text-xs">{row.cjk}</span>
            {row.post}
          </td>
          <td>{row.dia}</td>
          <td>
            <RebarMark className="ml-0.5" />
          </td>
          <td>{row.fig}</td>
          <td>
            <Shape side={row.side} />
          </td>
          <td>
            {row.formula.map((line) => (
              <div key={line}>{line}</div>
            ))}
          </td>
          <td className="text-xs leading-[14px]">
            {row.desc && (
              <>
                层高-本层
                <br />
                的露出…
              </>
            )}
          </td>
          <td>{row.bend}</td>
          <td>{row.len}</td>
          {row.editing ? (
            <td className="!border-2 !border-[#6aaae8] !p-0">
              <div className="relative flex h-[43px] items-center">
                <textarea
                  aria-label="根数"
                  defaultValue="Ceil(600/100)+1+Ceil(1050/100)+1+Ceil(1600/200)-1"
                  className={`h-full min-w-0 flex-1 resize-none overflow-hidden bg-white pl-1 text-[13px] leading-[17px] break-all whitespace-pre-wrap text-[#555] outline-none ${FONT}`}
                />
                <span className="absolute top-[18px] left-[102px] h-4 w-px bg-black" />
                <button aria-label="编辑公式" className="mr-1 flex h-[38px] w-4 items-center justify-center rounded-sm border border-[#6aaae8] bg-[#eef2fb]">
                  <svg width="10" height="2" viewBox="0 0 10 2" fill="#2a7be8">
                    <path d="M0 0h2v2H0zM4 0h2v2H4zM8 0h2v2H8z" />
                  </svg>
                </button>
              </div>
            </td>
          ) : (
            <td>{row.count}</td>
          )}
          <td>{row.lap}</td>
          <td>0</td>
          <td>{row.weight}</td>
        </tr>
      ))}
    </tbody>
  </table>
);

const EditPanel = () => (
  <section className="flex min-h-0 flex-3 flex-col overflow-hidden border border-[#d9d9d9] bg-white">
    <div className="flex h-[29px] shrink-0 items-center bg-[#eeeef0] pl-1.5">
      <Grip />
      <h2 className="ml-[11px]">编辑钢筋</h2>
      <CloseButton />
    </div>
    <EditToolbar />
    <div className="flex min-h-0 flex-1">
      <div className="relative min-w-0 flex-1 overflow-hidden">
        <RebarTable />
        <svg className="pointer-events-none absolute top-[90px] right-[264px]" width="77" height="206" viewBox="1272 507 77 206" fill="#ff2311">
          <path d="M1272 507h1l48 118 16 40 12-3-2 50-33-38 10-4-15-45z" />
        </svg>
      </div>
      <div className="w-3 shrink-0 pt-3 pl-1">
        <div className="h-[297px] w-1 rounded-full bg-[#e8e8e8]" />
      </div>
    </div>
    <div className="h-3 shrink-0 pt-1 pl-3">
      <div className="h-1 w-[69%] rounded-full bg-[#e8e8e8]" />
    </div>
  </section>
);

const StatusButton = ({ label, wide, active, children }: { label: string; wide?: boolean; active?: boolean; children: React.ReactNode }) => (
  <button
    aria-label={label}
    className={`flex h-[25px] shrink-0 items-center justify-center gap-1 rounded border ${wide ? 'w-9' : 'w-[25px]'} ${
      active ? 'border-[#3b8bea] bg-[#d6e6fb]' : 'border-[#9a9a9a] bg-white'
    }`}
  >
    <svg width="18" height="18" viewBox="0 0 18 18" fill="none" stroke="#4b5568" strokeWidth="1.200">
      {children}
    </svg>
    {wide && <Caret className="text-[#4b5568]" />}
  </button>
);

const StatusBar = () => (
  <footer className="flex h-8 shrink-0 items-center overflow-hidden border-b border-black bg-[#fcfcfc] pb-0.5 whitespace-nowrap">
    <div className="flex w-[452px] shrink-0 pl-0.5">
      <span className="w-10">层高：</span>
      <span className="w-[50px]">3.9</span>
      <span className="w-10">标高：</span>
      <span className="w-[99px]">0~3.9</span>
      <span className="w-[61px]">选中图元：</span>
      <span className="w-[50px]">1(4)</span>
      <span className="w-[60px]">隐藏图元：</span>
      <span>0</span>
    </div>
    <div className="flex items-center gap-1">
      <StatusButton label="正交">
        <path d="M3 3v12h13M3 11h4v4" />
      </StatusButton>
      <StatusButton label="矩形" wide active>
        <rect x="3" y="3" width="13" height="13" rx="2" />
        <circle cx="3.500" cy="3" r="1.800" stroke="#1f76e8" fill="#d6e6fb" />
      </StatusButton>
      <StatusButton label="交点">
        <path d="M1 1l16 16M17 1L1 17" stroke="#888" />
        <circle cx="9" cy="9" r="1.500" stroke="#888" />
      </StatusButton>
      <StatusButton label="角度" wide>
        <path d="M2 15L14 2" />
        <path d="M2 15.500h14" stroke="#a9adb8" strokeWidth="2" />
        <circle cx="7" cy="10" r="1.500" fill="#fff" />
      </StatusButton>
      <StatusButton label="偏移" wide>
        <path d="M1 5h7M4.500 1.500v7" />
        <path d="M7.500 11.500h10v4h-10z" fill="#4b5568" />
      </StatusButton>
      <StatusButton label="图层">
        <path d="M4.500 4h8v8h-8z" fill="#4b5568" />
        <path d="M2 2h12v2M2 2v12.500h9M15.500 5v5M5 14.500" />
        <path d="M12 10l5 4-3 .5-1.500 2.500z" fill="#4b5568" stroke="#fff" strokeWidth=".6" />
      </StatusButton>
      <StatusButton label="编辑折线">
        <path d="M2 15L5 6l9-3" />
        <circle cx="2" cy="15" r="1.300" />
        <circle cx="5" cy="6" r="1.300" />
        <circle cx="15" cy="3" r="1.300" />
        <path d="M11 8.500l5 4-3 .5-2 2.500z" fill="#4b5568" stroke="none" />
      </StatusButton>
      <button aria-label="全屏" className="ml-3">
        <svg width="16" height="16" viewBox="0 0 16 16" fill="none" stroke="#222" strokeWidth="1.200">
          <path d="M1 15l6-6M9 7l6-6M10 .8h5.200V6M.8 10v5.200H6" />
        </svg>
      </button>
    </div>
    <div className="-mr-[21px] ml-auto flex items-center gap-1.5 text-[13px]">
      <svg width="14" height="14" viewBox="0 0 14 14">
        <circle cx="7" cy="7" r="7" fill="#f5912d" />
        <path d="M6.200 3h1.600v5H6.200zM6.200 9.500h1.600V11H6.200z" fill="#fff" />
      </svg>
      合法性
    </div>
  </footer>
);

const App: React.FC = () => {
  return (
    <div className={`flex h-screen flex-col overflow-hidden bg-[#fcfcfc] text-xs text-[#222] ${FONT}`}>
      <header className="flex h-[29px] shrink-0 bg-[#f1f1f1]">
        {selectors.map((value, i) => (
          <label key={i} className="relative flex w-[100px] items-center border-r border-[#d6d6d6] pb-px">
            <select aria-label={`选择 ${i + 1}`} className="h-full w-full appearance-none bg-transparent pl-[3px] outline-none">
              <option>{value}</option>
            </select>
            <Caret className="pointer-events-none absolute right-1.5 text-[#555]" />
          </label>
        ))}
      </header>
      <div className="flex min-h-0 flex-1 gap-1 pr-1">
        <NavPanel />
        <div className="flex w-[328px] shrink-0 flex-col gap-[3px]">
          <ComponentPanel />
          <PropertyPanel />
        </div>
        <main className="flex min-w-0 flex-1 flex-col gap-1">
          <Viewport />
          <EditPanel />
        </main>
      </div>
      <StatusBar />
    </div>
  );
};

export default App;
